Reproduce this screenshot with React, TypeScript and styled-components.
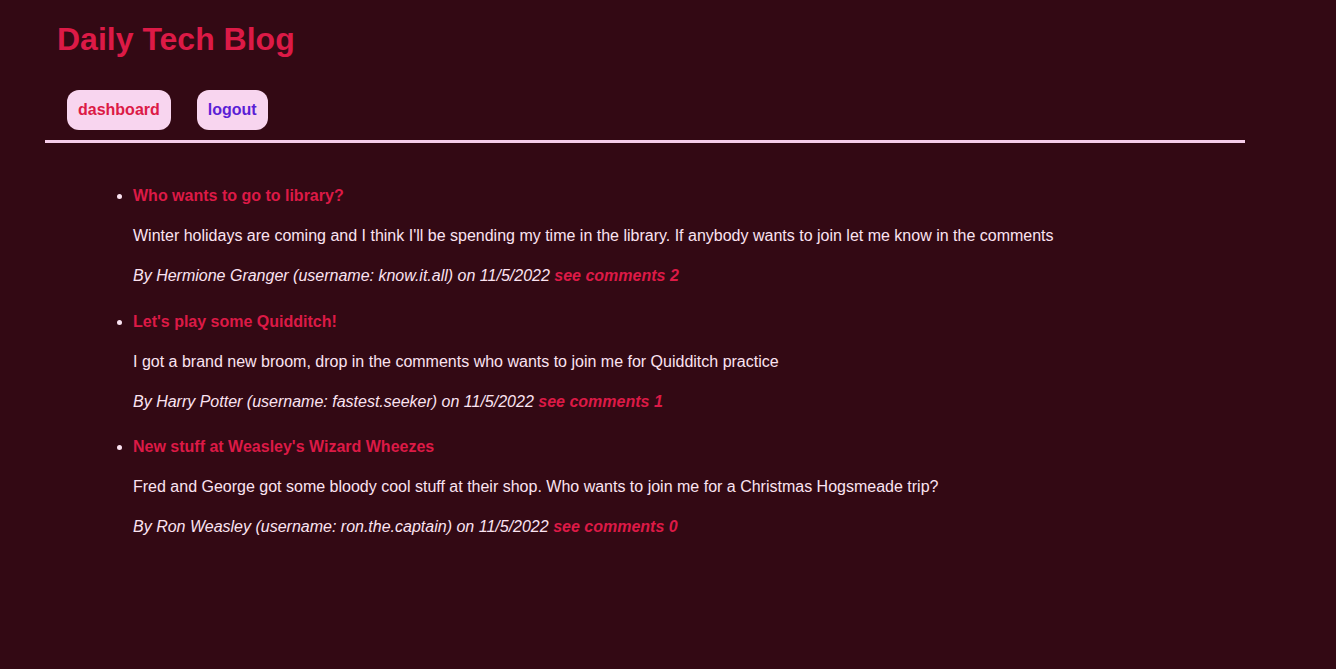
import React from "react";
import styled, { createGlobalStyle } from "styled-components";

const Global = createGlobalStyle`
  html, body { margin: 0; padding: 0; background: #330914; }
  body { font-family: "Liberation Sans", Arial, sans-serif; color: #fbe3f1; }
`;

const Page = styled.div`
  min-height: 669px;
  background: #330914;
`;

const Header = styled.header`
  width: 1200px;
  margin-left: 45px;
  padding: 21px 12px 10px;
  box-sizing: border-box;
  border-bottom: 3px solid #f7cdea;
`;

const Title = styled.h1`
  margin: 0;
  font-size: 32px;
  line-height: 37px;
  font-weight: bold;
  color: #dc1a46;
`;

const Nav = styled.nav`
  display: flex;
  gap: 26px;
  margin-top: 32px;
  padding-left: 10px;
`;

const NavButton = styled.a<{ $color: string }>`
  display: inline-flex;
  align-items: center;
  height: 40px;
  padding: 0 11px;
  border-radius: 12px;
  background: #f8d5ef;
  color: ${(p) => p.$color};
  font-size: 16px;
  font-weight: bold;
  text-decoration: none;
`;

const List = styled.ul`
  margin: 0;
  padding: 41px 0 0 133px;
  list-style: disc;
  color: #fbe3f1;
`;

const Item = styled.li`
  margin-bottom: 21.5px;
  font-size: 16px;
  line-height: 24px;
  &::marker { color: #fbe3f1; }
`;

const PostTitle = styled.a`
  display: block;
  color: #dc1a46;
  font-weight: bold;
  text-decoration: none;
`;

const Body = styled.p`
  margin: 16px 0 0;
  color: #fbe3f1;
`;

const Byline = styled.p`
  margin: 16px 0 0;
  font-style: italic;
  color: #fbe3f1;
`;

const CommentsLink = styled.a`
  color: #dc1a46;
  font-weight: bold;
  text-decoration: none;
`;

const posts = [
  {
    title: "Who wants to go to library?",
    body: "Winter holidays are coming and I think I'll be spending my time in the library. If anybody wants to join let me know in the comments",
    author: "Hermione Granger",
    user: "know.it.all",
    comments: 2,
  },
  {
    title: "Let's play some Quidditch!",
    body: "I got a brand new broom, drop in the comments who wants to join me for Quidditch practice",
    author: "Harry Potter",
    user: "fastest.seeker",
    comments: 1,
  },
  {
    title: "New stuff at Weasley's Wizard Wheezes",
    body: "Fred and George got some bloody cool stuff at their shop. Who wants to join me for a Christmas Hogsmeade trip?",
    author: "Ron Weasley",
    user: "ron.the.captain",
    comments: 0,
  },
];

export default function App() {
  return (
    <Page>
      <Global />
      <Header>
        <Title>Daily Tech Blog</Title>
        <Nav>
          <NavButton href="#" $color="#dc1a46">dashboard</NavButton>
          <NavButton href="#" $color="#5b1fd6">logout</NavButton>
        </Nav>
      </Header>
      <List>
        {posts.map((p) => (
          <Item key={p.title}>
            <PostTitle href="#">{p.title}</PostTitle>
            <Body>{p.body}</Body>
            <Byline>
              By {p.author} (username: {p.user}) on 11/5/2022{" "}
              <CommentsLink href="#">see comments {p.comments}</CommentsLink>
            </Byline>
          </Item>
        ))}
      </List>
    </Page>
  );
}
